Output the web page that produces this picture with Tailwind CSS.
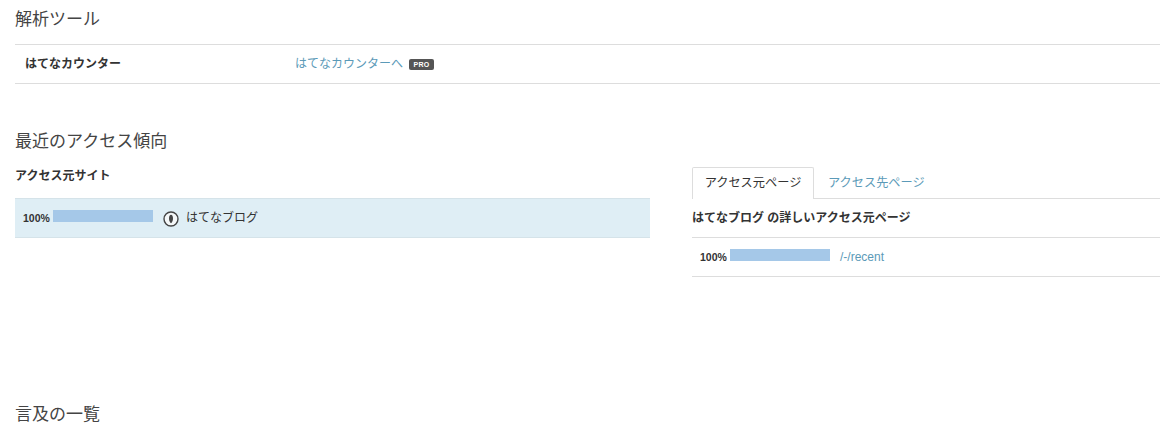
<!DOCTYPE html>
<html lang="ja">
<head>
<meta charset="utf-8">
<script src="https://cdn.jsdelivr.net/npm/@tailwindcss/browser@4"></script>
</head>
<body class="bg-white overflow-hidden font-['Liberation_Sans','Noto_Sans_CJK_JP',sans-serif] text-[#333]">
<div class="w-[1160px] h-[431px] overflow-hidden pl-[15px]">
  <h2 class="text-[17px] leading-[24px] h-[44px] pt-[8px] text-[#444] font-normal">解析ツール</h2>
  <div class="h-[40px] border-y border-[#ddd] flex items-center pl-[10px] text-[12px]">
    <div class="w-[270px] font-bold">はてなカウンター</div>
    <a class="text-[#5b9ab8]">はてなカウンターへ</a>
    <span class="ml-[6px] w-[25px] h-[11px] rounded-[2px] bg-[#555] text-white text-[7px] leading-[11px] font-bold text-center tracking-[0.3px]">PRO</span>
  </div>
  <h2 class="mt-[46px] text-[17px] leading-[24px] text-[#444] font-normal">最近のアクセス傾向</h2>
  <div class="flex mt-[13px]">
    <div class="w-[635px]">
      <h3 class="text-[12px] leading-[18px] font-bold h-[31px]">アクセス元サイト</h3>
      <div class="h-[40px] bg-[#dfeef5] border-y border-[#d5e3e9] flex items-center pl-[8px] text-[12px]">
        <span class="w-[30px] text-[10.5px] font-bold mt-[1px]">100%</span>
        <span class="w-[100px] h-[12px] bg-[#a5c8e8] -mt-[5px]"></span>
        <svg class="ml-[10px] w-[16px] h-[16px] mt-[1px]" viewBox="0 0 16 16"><circle cx="8" cy="8" r="7" fill="#f4f7f8" stroke="#444" stroke-width="1.4"/><path d="M8 3.800C9.200 3.800 10 5.300 10 7.400 10 9.500 9.200 11.200 8 12.300 6.800 11.200 6 9.500 6 7.400 6 5.300 6.800 3.800 8 3.800z" fill="#444"/></svg>
        <span class="ml-[7px]">はてなブログ</span>
      </div>
    </div>
    <div class="ml-[42px] flex-1">
      <div class="h-[32px] border-b border-[#ddd] flex text-[12.2px]">
        <div class="w-[122px] h-[32px] bg-white border border-b-0 border-[#ddd] rounded-t-[2px] flex items-center justify-center">アクセス元ページ</div>
        <a class="ml-[14px] leading-[33px] text-[#5b9ab8]">アクセス先ページ</a>
      </div>
      <div class="h-[38px] pb-[1px] flex items-center text-[12px] font-bold">はてなブログ の詳しいアクセス元ページ</div>
      <div class="h-[40px] border-y border-[#ddd] flex items-center pl-[8px] text-[12px]">
        <span class="w-[30px] text-[10.5px] font-bold mt-[1px]">100%</span>
        <span class="w-[100px] h-[12px] bg-[#a5c8e8] -mt-[5px]"></span>
        <a class="ml-[10px] text-[#5b9ab8]">/-/recent</a>
      </div>
    </div>
  </div>
  <h2 class="mt-[126px] text-[17px] leading-[24px] text-[#444] font-normal">言及の一覧</h2>
</div>
</body>
</html>
